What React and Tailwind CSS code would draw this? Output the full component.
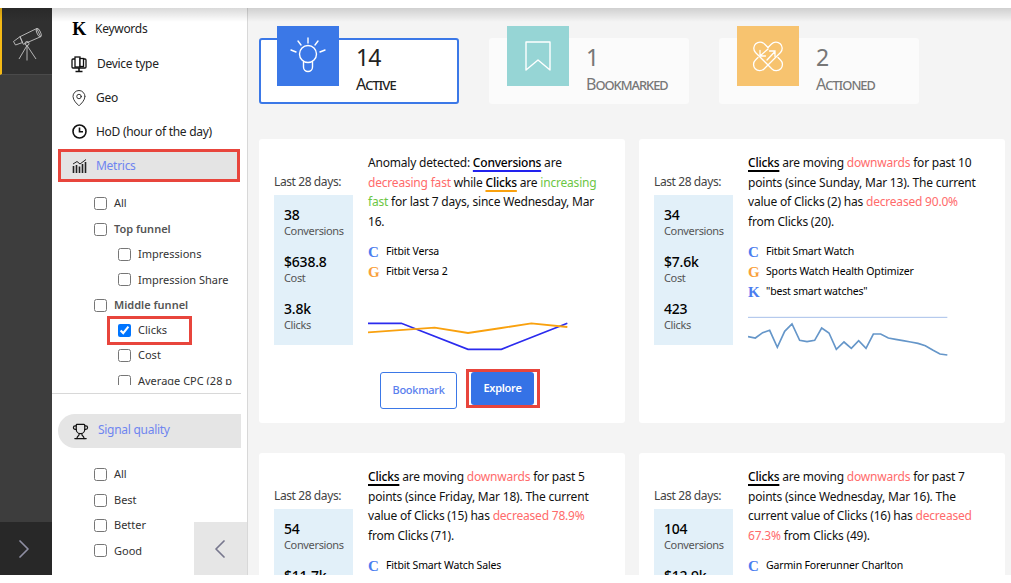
import React from "react";
import { MapPin, Trophy, ChevronRight, ChevronLeft } from "lucide-react";

const Telescope = () => (
  <svg width="29" height="33" viewBox="0 0 29 33" fill="none" stroke="#c4c4c4" strokeWidth="0.9" className="block">
    <path d="M7 8.7 L23.7 0.5 L27.7 8.7 L10.3 16.3 Z" />
    <path d="M0.5 13.5 L7 8.7 L9.5 14.5 L2.5 17 Z" />
    <ellipse cx="25.7" cy="4.6" rx="1.8" ry="4.4" transform="rotate(-25 25.7 4.6)" />
    <circle cx="14" cy="15.5" r="2" />
    <path d="M14 17.5 L6 31 M14 17.5 V32.5 M14 17.5 L23 31" />
  </svg>
);
const DeviceIcon = () => (
  <svg width="16" height="17" viewBox="0 0 16 17" fill="none" stroke="#111" strokeWidth="1.3" className="block">
    <rect x="1" y="3" width="14" height="9" rx="1" />
    <rect x="4" y="1" width="5" height="10" fill="#fff" />
    <rect x="9" y="2.5" width="3.5" height="8" fill="#fff" />
    <path d="M8 12 V15 M4.5 15.5 H11.5" strokeWidth="1.6" />
  </svg>
);
const ClockIcon = () => (
  <svg width="15" height="15" viewBox="0 0 15 15" fill="none" stroke="#111" strokeWidth="1.6" className="block">
    <circle cx="7.5" cy="7.5" r="6.5" />
    <path d="M7.5 3.5 V7.8 H11" />
  </svg>
);
const MetricsIcon = () => (
  <svg width="15" height="14" viewBox="0 0 15 14" fill="none" stroke="#222" className="block">
    <path d="M1.5 14 V7 M4.5 14 V6 M7.5 14 V7.5 M10.5 14 V5 M13.5 14 V3" strokeWidth="1.6" />
    <path d="M1 5 L5 2.5 L8 5 L14 0.5" strokeWidth="1" />
  </svg>
);
const BulbIcon = () => (
  <svg width="36" height="38" viewBox="0 0 36 38" fill="none" stroke="#fff" strokeWidth="1.4" strokeLinecap="round" className="block">
    <circle cx="18" cy="17" r="8.5" />
    <path d="M13.5 24.5 V30 A4.5 4.5 0 0 0 22.5 30 V24.5" />
    <path d="M18 1 V6 M8 4 L11 8 M28 4 L25 8 M1 13 L6 15 M35 13 L30 15" />
  </svg>
);
const BookmarkIcon = () => (
  <svg width="26" height="30" viewBox="0 0 26 30" fill="none" stroke="#fff" strokeWidth="1.4" strokeLinejoin="round" className="block">
    <path d="M1 1 H25 V29 L13 19 L1 29 Z" />
  </svg>
);
const ActionIcon = () => (
  <svg width="32" height="32" viewBox="0 0 32 32" fill="none" stroke="#fff" strokeWidth="1.3" strokeLinecap="round" className="block">
    <path d="M16 7.5 L12.5 4 A5.8 5.8 0 0 0 3.5 12.5 L20 29 A5.8 5.8 0 0 0 28.5 20 L26 17.5" />
    <path d="M16 7.5 L19.5 4 A5.8 5.8 0 0 1 28.5 12.5 L12 29 A5.8 5.8 0 0 1 3.5 20 L6 17.5" />
    <path d="M16 9 L8 16 M8 10.5 V16 H13.5" />
    <path d="M15 20 L23 11.5 M17.5 11 H23 V16.5" />
  </svg>
);

const Nav = ({ icon, label, className = "h-[34px]" }) => (
  <div className={`flex items-center text-[#222] ${className}`}>
    <div className="w-[18px] flex justify-center">{icon}</div>
    <span className="ml-[7px]">{label}</span>
  </div>
);

const Check = ({ label, indent, strong }) => (
  <label className={`flex items-center h-[25.4px] text-[11px] tracking-normal ${indent ? "pl-[66px]" : "pl-[42px]"} ${strong ? "font-semibold text-[#555]" : "text-[#333]"}`}>
    <input type="checkbox" readOnly checked={false} className="w-[13px] h-[13px]" />
    <span className="ml-[7px] whitespace-nowrap">{label}</span>
  </label>
);

const Stat = ({ icon, color, n, label, active }) => (
  <div className={`w-[200px] h-[66px] rounded-[3px] flex pl-[18px] ${active ? "bg-white border-2 border-[#3b78e7]" : "bg-[#fbfbfb]"}`}>
    <div className={`w-[62px] h-[60px] shrink-0 flex items-center justify-center ${active ? "-mt-[14px] -ml-[2px]" : "-mt-[12px]"}`} style={{ background: color }}>
      {icon}
    </div>
    <div className={`ml-[17px] ${active ? "text-[#222]" : "text-[#777]"}`}>
      <div className={`text-[23px] leading-[32px] tracking-[-1px] ${active ? "mt-[1px]" : "mt-[3px]"}`}>{n}</div>
      <div className="text-[16px] leading-[20px] mt-[1px] tracking-[-1px] [font-variant:small-caps]">{label}</div>
    </div>
  </div>
);

const U = ({ c = "", children }) => <span className={`font-medium text-black underline decoration-[1.5px] underline-offset-[3px] ${c}`}>{children}</span>;
const R = ({ children }) => <span className="text-[#ff6b6b]">{children}</span>;
const G = ({ children }) => <span className="text-[#6cc644]">{children}</span>;

const Tag = ({ l, c, children }) => (
  <div className="flex items-center h-[20px] text-[10.5px] tracking-[-0.15px] text-black">
    <span className={`w-[18px] shrink-0 font-['Liberation_Serif'] font-bold text-[15px] ${c}`}>{l}</span>
    <span>{children}</span>
  </div>
);

const Card = ({ m, text, tags, chart, buttons }) => (
  <div className="bg-white rounded-[3px] h-[284px] flex pl-[15px] overflow-hidden">
    <div className="w-[79px] shrink-0 pt-[35px]">
      <div className="text-[#444] h-[21px] leading-[16px] whitespace-nowrap tracking-[-0.4px]">Last 28 days:</div>
      <div className="bg-[#e2f0f9] h-[150px] w-[79px] pl-[10px] pt-[11px]">
        {m.map(([v, l]) => (
          <div key={l} className="h-[47px]">
            <div className="text-[14px] leading-[18px] font-medium text-black tracking-[-0.2px]">{v}</div>
            <div className="text-[11px] leading-[13px] text-[#555] tracking-[-0.35px]">{l}</div>
          </div>
        ))}
      </div>
    </div>
    <div className="ml-[15px] flex-1 pr-[24px] pt-[14px] min-w-0">
      <div className="leading-[19.6px] text-[#111] h-[79px] tracking-[-0.2px]">{text}</div>
      <div className="mt-[10px]">{tags}</div>
      {chart}
      {buttons}
    </div>
  </div>
);

const Chart1 = () => (
  <svg width="200" height="60" viewBox="340 60 600 180" fill="none" className="block mt-[28px]">
    <polyline points="340,100 440,100 640,178 740,178 938,100" stroke="#2b2bee" strokeWidth="5" />
    <polyline points="340,127 540,113 640,129 740,114 830,100 938,111" stroke="#f9a10e" strokeWidth="5.5" />
  </svg>
);
const Chart2 = () => (
  <svg width="200" height="60" viewBox="340 60 600 180" fill="none" className="block mt-[8px]">
    <line x1="340" y1="82" x2="938" y2="82" stroke="#a8c0ea" strokeWidth="3" />
    <polyline points="340,140 362,144 384,128 405,121 428,172 450,124 472,102 495,151 517,155 540,151 561,114 583,129 605,178 628,156 650,175 672,152 694,175 716,132 738,132 761,144 783,148 805,152 828,156 850,160 872,167 894,180 916,192 938,195" stroke="#6596c9" strokeWidth="5" />
  </svg>
);

export default function App() {
  return (
    <div className="w-[1011px] h-[583px] bg-white overflow-hidden font-['Noto_Sans',sans-serif] text-[12px] tracking-[-0.28px] flex flex-col">
      <div className="h-[8px] shrink-0 bg-white" />
      <div className="flex h-[567px] shrink-0 relative">
        <div className="absolute left-0 right-0 top-0 h-[14px] bg-gradient-to-b from-[#00000026] to-transparent z-10 pointer-events-none" />
        <aside className="w-[52px] shrink-0 bg-[#3d3d3d] flex flex-col justify-between">
          <div className="h-[67px] bg-[#303030] border-l-2 border-[#f4b915] border-b border-b-[#4a4a4a] flex items-center justify-center pt-[6px]">
            <Telescope />
          </div>
          <div className="h-[53px] bg-[#282828] flex items-center justify-center pr-[4px]">
            <ChevronRight size={32} strokeWidth={1.3} color="#8f8fa3" />
          </div>
        </aside>

        <aside className="w-[196px] shrink-0 bg-white border-r border-[#d8d8d8] relative">
          <div className="pl-[18px] pt-[3px]">
            <Nav className="h-[36px]" icon={<span className="font-['Liberation_Serif'] font-bold text-[18px] text-black">K</span>} label="Keywords" />
            <Nav icon={<DeviceIcon />} label={<span className="ml-[2px]">Device type</span>} />
            <Nav icon={<MapPin size={18} strokeWidth={1.2} color="#222" />} label={<span className="ml-[1px]">Geo</span>} />
            <Nav className="h-[33px]" icon={<ClockIcon />} label={<span className="ml-[1px]">HoD (hour of the day)</span>} />
          </div>
          <div className="ml-[6px] mt-[1px] w-[182px] h-[33px] border-[3px] border-[#e8453c] bg-[#e4e4e4] flex items-center pl-[9px] text-[#6f85f0]">
            <div className="w-[18px] flex justify-center"><MetricsIcon /></div>
            <span className="ml-[8px]">Metrics</span>
          </div>
          <div className="h-[203px] w-[189px] overflow-hidden pt-[9px]">
            <Check label="All" />
            <Check label="Top funnel" strong />
            <Check label="Impressions" indent />
            <Check label="Impression Share" indent />
            <Check label="Middle funnel" strong />
            <div className="ml-[55px] w-[85px] h-[29px] -my-[2px] border-[3px] border-[#e8453c] flex items-center pl-[8px] text-[11px] tracking-normal text-[#333]">
              <input type="checkbox" readOnly checked className="w-[13px] h-[13px]" />
              <span className="ml-[7px]">Clicks</span>
            </div>
            <Check label="Cost" indent />
            <Check label="Average CPC (28 p" indent />
          </div>
          <div className="w-[189px] border-t border-[#d8d8d8] mt-[8px]" />
          <div className="ml-[6px] mt-[20px] w-[183px] h-[34px] bg-[#e5e5e5] rounded-l-[17px] flex items-center pl-[14px] text-[#6f85f0]">
            <Trophy size={17} strokeWidth={1.7} color="#111" />
            <span className="ml-[9px] -mt-[2px]">Signal quality</span>
          </div>
          <div className="pt-[14px]">
            <Check label="All" />
            <Check label="Best" />
            <Check label="Better" />
            <Check label="Good" />
          </div>
          <div className="absolute right-0 bottom-0 w-[53px] h-[53px] bg-[#e6e6e6] flex items-center justify-center pr-[2px]">
            <ChevronLeft size={32} strokeWidth={1.3} color="#77778d" />
          </div>
        </aside>

        <main className="flex-1 bg-[#f4f4f4] pl-[11px] pr-[6px] pt-[30px] overflow-hidden">
          <div className="flex gap-[30px]">
            <Stat active icon={<BulbIcon />} color="#3b78e7" n="14" label="Active" />
            <Stat icon={<BookmarkIcon />} color="#96d5d5" n="1" label="Bookmarked" />
            <Stat icon={<ActionIcon />} color="#f7c36f" n="2" label="Actioned" />
          </div>
          <div className="grid grid-cols-[366px_366px] gap-x-[14px] gap-y-[30px] mt-[35px]">
            <Card
              m={[["38", "Conversions"], ["$638.8", "Cost"], ["3.8k", "Clicks"]]}
              text={<>Anomaly detected: <U c="decoration-[#2222ee] decoration-2">Conversions</U> are <R>decreasing fast</R> while <U c="decoration-[#f9a10e] decoration-2">Clicks</U> are <G>increasing fast</G> for last 7 days, since Wednesday, Mar 16.</>}
              tags={<><Tag l="C" c="text-[#4a7df0]">Fitbit Versa</Tag><Tag l="G" c="text-[#f9a13a]">Fitbit Versa 2</Tag></>}
              chart={<Chart1 />}
              buttons={
                <div className="flex items-start mt-[2px] ml-[12px]">
                  <div className="w-[77px] h-[37px] border border-[#3b78e7] rounded-[3px] flex items-center justify-center text-[11px] font-medium text-[#5a80ee]">Bookmark</div>
                  <div className="ml-[9px] -mt-[3px] w-[74px] h-[39px] border-[3px] border-[#e8453c] flex items-center pl-[2px]">
                    <div className="w-[63px] h-[33px] bg-[#3572e6] rounded-[3px] flex items-center justify-center text-[11px] font-semibold text-white">Explore</div>
                  </div>
                </div>
              }
            />
            <Card
              m={[["34", "Conversions"], ["$7.6k", "Cost"], ["423", "Clicks"]]}
              text={<><U>Clicks</U> are moving <R>downwards</R> for past 10 points (since Sunday, Mar 13). The current value of Clicks (2) has <R>decreased 90.0%</R> from Clicks (20).</>}
              tags={<><Tag l="C" c="text-[#4a7df0]">Fitbit Smart Watch</Tag><Tag l="G" c="text-[#f9a13a]">Sports Watch Health Optimizer</Tag><Tag l="K" c="text-[#4a7df0]">"best smart watches"</Tag></>}
              chart={<Chart2 />}
            />
            <Card
              m={[["54", "Conversions"], ["$11.7k", "Cost"], ["512", "Clicks"]]}
              text={<><U>Clicks</U> are moving <R>downwards</R> for past 5 points (since Friday, Mar 18). The current value of Clicks (15) has <R>decreased 78.9%</R> from Clicks (71).</>}
              tags={<Tag l="C" c="text-[#4a7df0]">Fitbit Smart Watch Sales</Tag>}
            />
            <Card
              m={[["104", "Conversions"], ["$12.9k", "Cost"], ["890", "Clicks"]]}
              text={<><U>Clicks</U> are moving <R>downwards</R> for past 7 points (since Wednesday, Mar 16). The current value of Clicks (16) has <R>decreased 67.3%</R> from Clicks (49).</>}
              tags={<Tag l="C" c="text-[#4a7df0]">Garmin Forerunner Charlton</Tag>}
            />
          </div>
        </main>
      </div>
      <div className="h-[8px] shrink-0 bg-white" />
    </div>
  );
}
